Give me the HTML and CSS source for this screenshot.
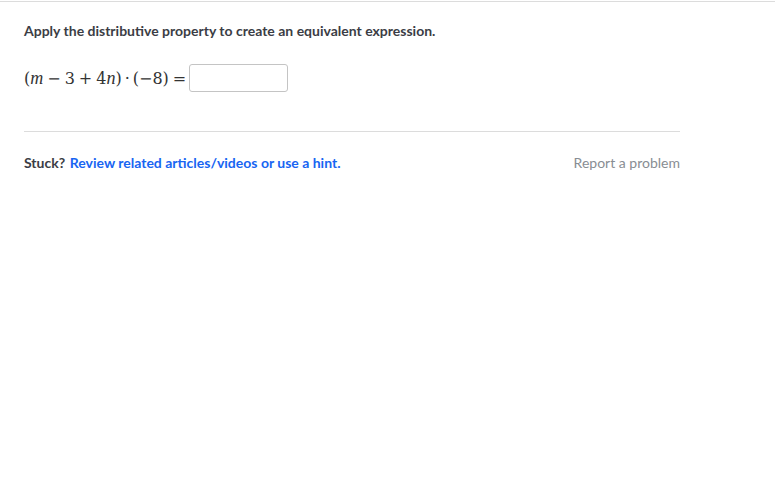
FILE: index.html
```html
<!DOCTYPE html>
<html>
<head>
<meta charset="utf-8">
<link rel="stylesheet" href="styles.css">
</head>
<body>
<div class="topbar"></div>
<main class="content">
  <p class="prompt">Apply the distributive property to create an equivalent expression.</p>
  <div class="equation">
    <span class="math">(<i>m</i><span class="op">−</span>3<span class="op">+</span>4<i>n</i>)<span class="op dot">·</span>(−8)<span class="op eq">=</span></span>
    <span class="answer"></span>
  </div>
  <hr class="divider">
  <div class="footer">
    <div class="stuck"><span class="label">Stuck?</span> <a class="hint">Review related articles/videos or use a hint.</a></div>
    <a class="report">Report a problem</a>
  </div>
</main>
</body>
</html>
```
FILE: styles.css
```css
html, body { margin: 0; padding: 0; background: #fff; }
body { font-family: Lato, "Open Sans", sans-serif; color: #21242c; }
.topbar { height: 1px; border-bottom: 1px solid #dcdcdc; }
.content { width: 656px; padding: 0 24px; }
.prompt { margin: 19px 0 0; font-size: 14px; font-weight: 700; line-height: 20px; color: #3b3d45; }
.equation { display: flex; align-items: center; margin-top: 22px; height: 30px; }
.math { font-family: "DejaVu Serif", "Liberation Serif", serif; font-size: 16px; color: #333; letter-spacing: 0; }
.math i { font-family: "Liberation Serif", serif; font-size: 18px; }
.op { margin: 0 4px; }
.op.dot { margin: 0 3px; }
.op.eq { margin: 0 3px 0 4px; }
.answer { display: inline-block; width: 97px; height: 26px; border: 1px solid #c4c4c4; border-radius: 3px; box-sizing: content-box; }
.divider { border: 0; border-top: 1px solid #dcdcdc; margin: 38px 0 0; }
.footer { display: flex; justify-content: space-between; align-items: center; margin-top: 22px; font-size: 14px; line-height: 18px; }
.stuck .label { font-weight: 700; color: #3b3d45; }
.hint { color: #1865f2; font-weight: 700; margin-left: 1px; }
.report { color: #888d93; }
```
